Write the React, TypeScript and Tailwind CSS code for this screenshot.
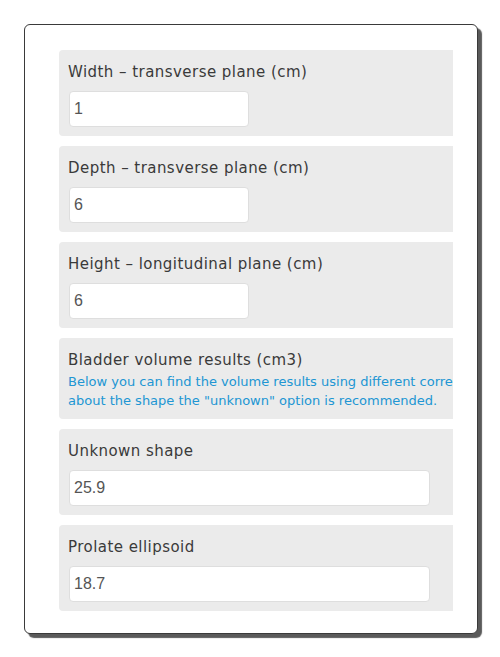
import React from 'react';

interface Field {
  label: string;
  value: string;
  wide?: boolean;
}

const inputs: Field[] = [
  { label: 'Width – transverse plane (cm)', value: '1' },
  { label: 'Depth – transverse plane (cm)', value: '6' },
  { label: 'Height – longitudinal plane (cm)', value: '6' },
];

const results: Field[] = [
  { label: 'Unknown shape', value: '25.9', wide: true },
  { label: 'Prolate ellipsoid', value: '18.7', wide: true },
];

const FieldBox = ({ field }: { field: Field }) => (
  <div className="bg-[#ebebeb] rounded-l-[4px] w-[420px] pl-[9px] pt-[10px] pb-[9.5px]">
    <div className="text-[15px] leading-[24px] text-[#3a3a3a] font-['DejaVu_Sans',sans-serif] tracking-[0.45px]">
      {field.label}
    </div>
    <input
      readOnly
      value={field.value}
      className={`mt-[6.5px] ml-[1px] h-[36px] bg-white border border-[#dedede] rounded-[4px] px-[4px] text-[16px] text-[#555] font-['Liberation_Sans',sans-serif] outline-none ${
        field.wide ? 'w-[361px]' : 'w-[180px]'
      }`}
    />
  </div>
);

const App = () => {
  return (
    <div className="bg-white w-[500px] h-[657px] pt-[24px] pl-[24px]">
      <div className="w-[454px] h-[610px] bg-white border-[1.5px] border-[#3a3a3a] rounded-[6px] shadow-[4px_4px_1px_#5a5a5a] pt-[25px] pl-[34px]">
        <div className="w-[394px] overflow-hidden flex flex-col gap-[10px]">
          {inputs.map((f) => (
            <FieldBox key={f.label} field={f} />
          ))}

          <div className="bg-[#ebebeb] rounded-l-[4px] w-[420px] pl-[9px] pt-[10px] pb-[9px] whitespace-nowrap">
            <div className="text-[15px] leading-[24px] text-[#3a3a3a] font-['DejaVu_Sans',sans-serif] tracking-[0.45px]">
              Bladder volume results (cm3)
            </div>
            <div className="text-[13px] leading-[19px] text-[#2196d3] font-['DejaVu_Sans',sans-serif]">
              <div>Below you can find the volume results using different correction coefficients. If you are not sure</div>
              <div>about the shape the "unknown" option is recommended.</div>
            </div>
          </div>

          {results.map((f) => (
            <FieldBox key={f.label} field={f} />
          ))}
        </div>
      </div>
    </div>
  );
};

export default App;
